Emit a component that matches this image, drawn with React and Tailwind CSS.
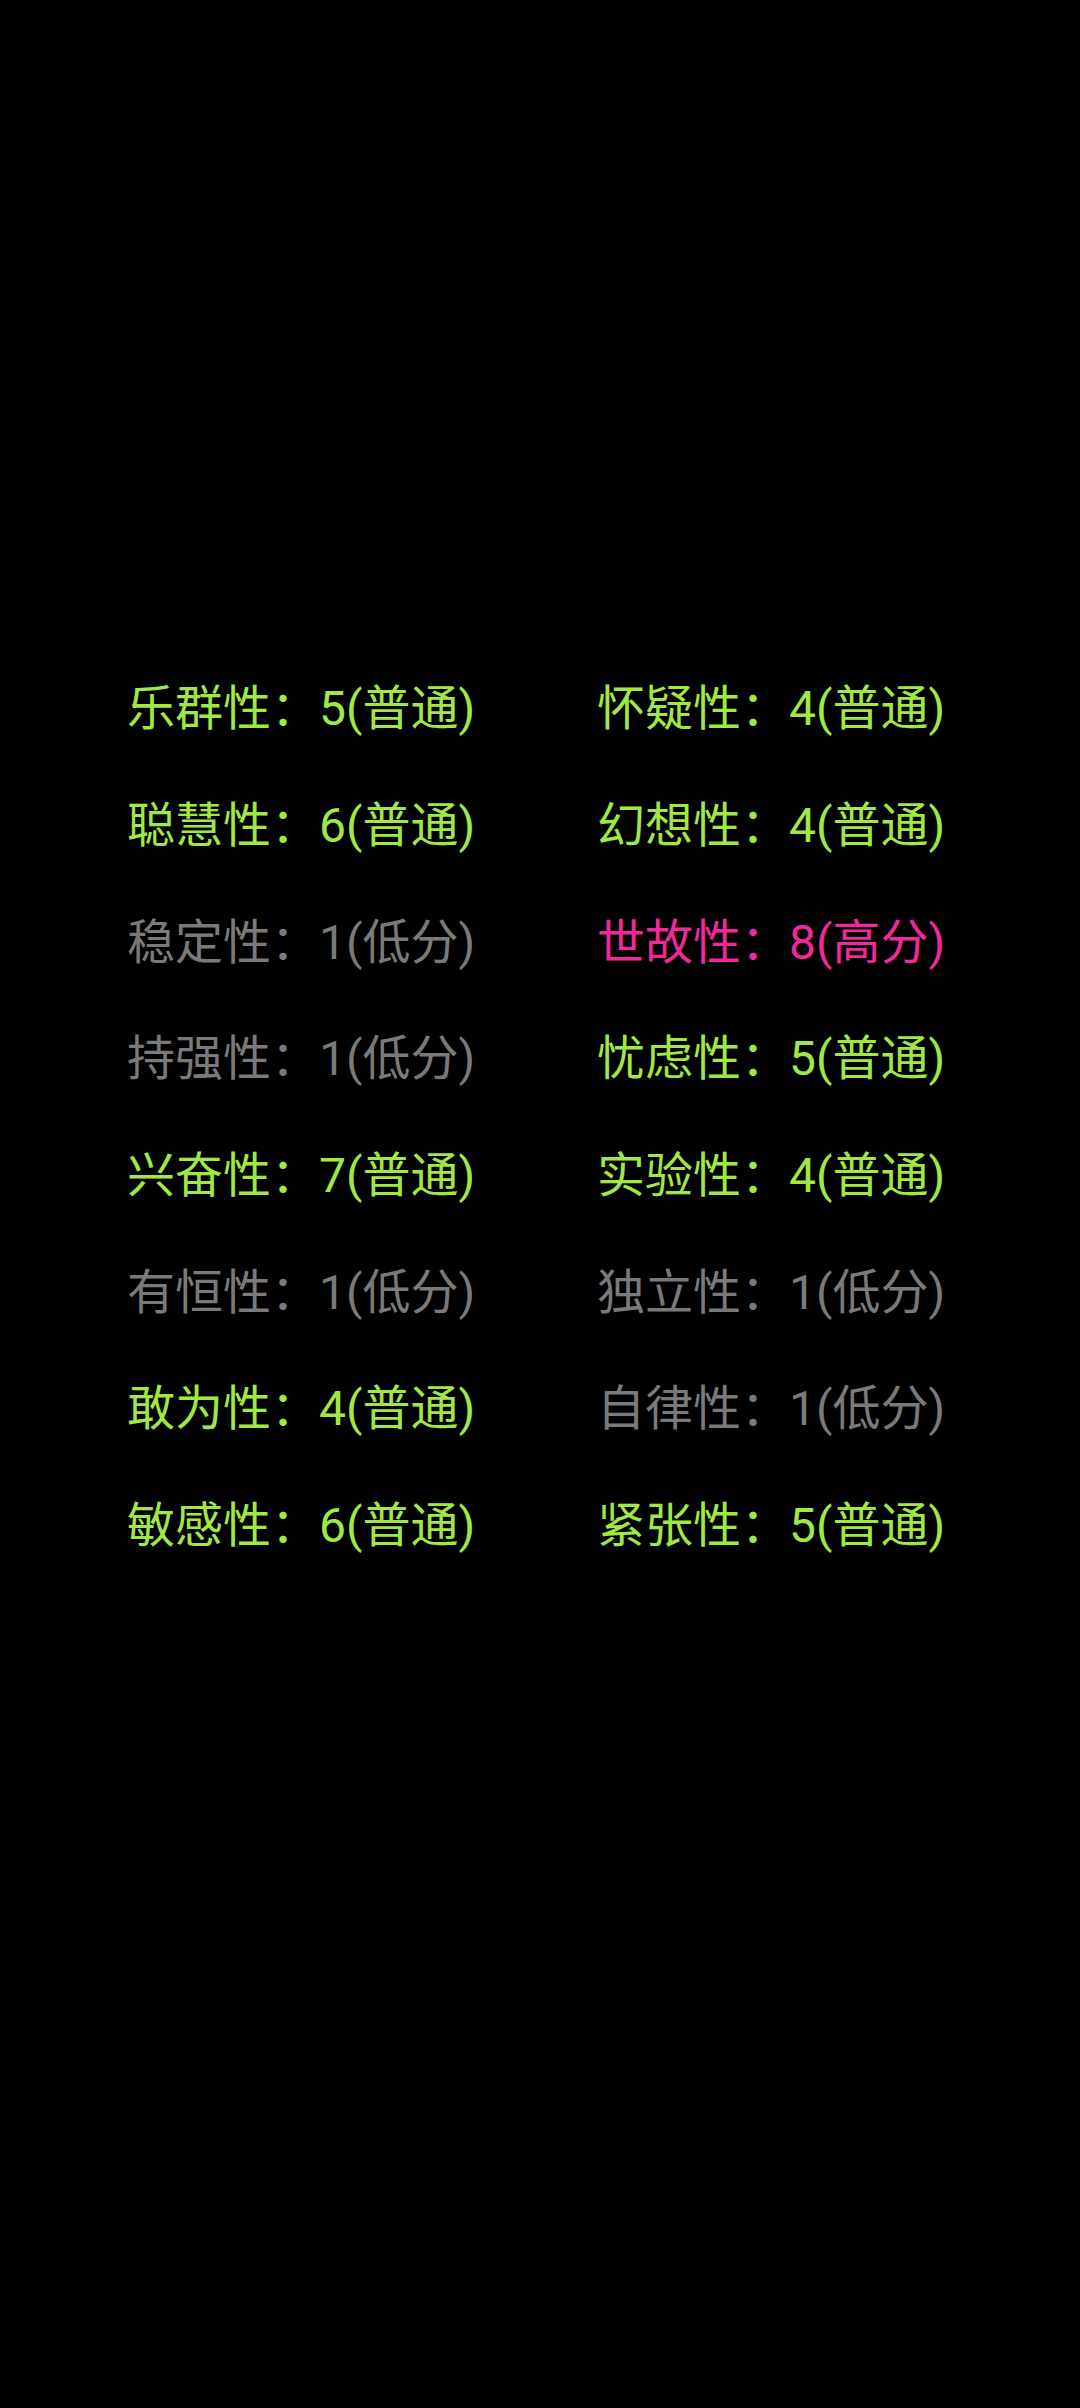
import React from "react";

const G = "text-[#a0e844]";
const Y = "text-[#7a7a7a]";
const P = "text-[#f0289a]";

const rows = [
  [["乐群性", "5(普通)", G], ["怀疑性", "4(普通)", G]],
  [["聪慧性", "6(普通)", G], ["幻想性", "4(普通)", G]],
  [["稳定性", "1(低分)", Y], ["世故性", "8(高分)", P]],
  [["持强性", "1(低分)", Y], ["忧虑性", "5(普通)", G]],
  [["兴奋性", "7(普通)", G], ["实验性", "4(普通)", G]],
  [["有恒性", "1(低分)", Y], ["独立性", "1(低分)", Y]],
  [["敢为性", "4(普通)", G], ["自律性", "1(低分)", Y]],
  [["敏感性", "6(普通)", G], ["紧张性", "5(普通)", G]],
];

export default function App() {
  return (
    <div
      className="min-h-[2408px] w-[1080px] bg-black pt-[651px] pl-[127px]"
      style={{ fontFamily: 'Roboto, "Noto Sans CJK SC", sans-serif' }}
    >
      <div className="grid grid-cols-[470px_1fr] auto-rows-[116.7px] items-center text-[48px] leading-[58px]">
        {rows.map((r, i) => (
          <React.Fragment key={i}>
            {r.map(([k, v, c], j) => (
              <div key={j} className={`${c} whitespace-nowrap`}>
                {k}：{v}
              </div>
            ))}
          </React.Fragment>
        ))}
      </div>
    </div>
  );
}
